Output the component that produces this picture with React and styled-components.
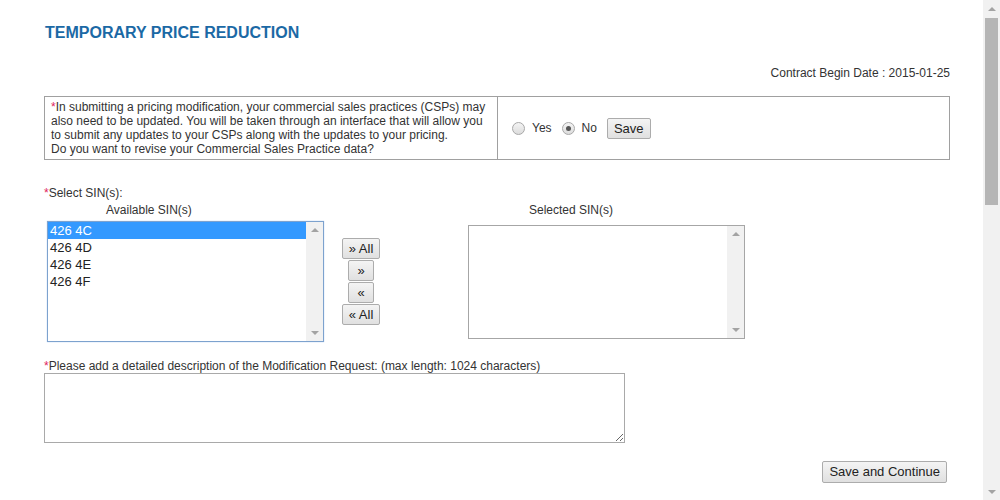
import React from 'react';
import styled, { createGlobalStyle } from 'styled-components';

const GlobalStyle = createGlobalStyle`
  body {
    margin: 0;
    background: #fff;
    color: #333;
    font-family: 'Liberation Sans', Arial, sans-serif;
  }
`;

const Window = styled.div`
  display: flex;
  height: 500px;
  overflow: hidden;
`;

const Page = styled.div`
  flex: 1;
  padding: 23px 33px 0 44px;
`;

const PageScrollbar = styled.div`
  width: 17px;
  background: #f1f1f1;
  display: flex;
  flex-direction: column;
  align-items: center;
`;

const ScrollButton = styled.div`
  height: 17px;
  display: flex;
  align-items: center;
  justify-content: center;
`;

const PageThumb = styled.div`
  width: 13px;
  height: 187px;
  margin-top: 1px;
  background: #b5b5b5;
`;

const Spacer = styled.div`
  flex: 1;
`;

const Title = styled.h1`
  margin: 0;
  font-size: 16px;
  line-height: 19px;
  font-weight: bold;
  color: #1b69a5;
  padding-left: 1px;
`;

const ContractDate = styled.div`
  margin-top: 24px;
  font-size: 12px;
  line-height: 14px;
  text-align: right;
`;

const CspTable = styled.div`
  margin-top: 16px;
  display: grid;
  grid-template-columns: 453px 1fr;
  border: 1px solid #a0a0a0;
`;

const CspQuestion = styled.div`
  padding: 3px 4px 3px 6px;
  border-right: 1px solid #a0a0a0;
  font-size: 12px;
  line-height: 14px;
`;

const CspAnswer = styled.div`
  display: flex;
  align-items: center;
  padding-left: 14px;
  font-size: 12px;
`;

const Req = styled.span`
  color: #e0245e;
`;

const RadioLabel = styled.label`
  display: flex;
  align-items: center;
  gap: 7px;
  margin-right: 10px;
`;

const Radio = styled.span`
  width: 11px;
  height: 11px;
  border-radius: 50%;
  border: 1px solid #a8a8a8;
  background: linear-gradient(#f4f4f4, #dcdcdc);
  display: flex;
  align-items: center;
  justify-content: center;
  &::after {
    content: '';
    width: 5px;
    height: 5px;
    border-radius: 50%;
    background: ${p => (p.checked ? '#555' : 'transparent')};
  }
`;

const Button = styled.button`
  font-family: 'Liberation Sans', Arial, sans-serif;
  font-size: 13px;
  line-height: ${p => p.$lh || 15}px;
  color: #222;
  padding: 2px ${p => p.$pad || 6}px;
  border: 1px solid #acacac;
  border-radius: 2px;
  background: linear-gradient(#f4f4f4, #e0e0e0);
  cursor: pointer;
`;

const FieldLabel = styled.div`
  margin-top: ${p => p.$top}px;
  font-size: 12px;
  line-height: 14px;
`;

const PickerGrid = styled.div`
  display: grid;
  grid-template-columns: 297px 127px 1fr;
  align-items: center;
`;

const ColHeader = styled.div`
  font-size: 12px;
  line-height: 14px;
  margin: 3px 0 4px;
  padding-left: ${p => p.$indent}px;
`;

const ListBox = styled.div`
  margin-left: ${p => p.$left || 0}px;
  width: 277px;
  height: ${p => p.$height}px;
  box-sizing: border-box;
  border: 1px solid ${p => (p.$focused ? '#7da2ce' : '#a6a6a6')};
  box-shadow: ${p => (p.$focused ? '0 0 1px #9ec3ef' : 'none')};
  display: flex;
  background: #fff;
`;

const Options = styled.div`
  flex: 1;
  font-size: 13px;
  line-height: 17px;
`;

const Option = styled.div`
  padding-left: 2px;
  background: ${p => (p.selected ? '#3399ff' : 'transparent')};
  color: ${p => (p.selected ? '#fff' : '#222')};
`;

const ScrollTrack = styled.div`
  width: 17px;
  background: #f1f1f1;
  display: flex;
  flex-direction: column;
  justify-content: space-between;
  align-items: center;
  padding: 6px 0;
`;

const Arrow = styled.span`
  width: 0;
  height: 0;
  border-left: 4px solid transparent;
  border-right: 4px solid transparent;
  ${p => (p.down ? 'border-top: 4px solid #a3a3a3;' : 'border-bottom: 4px solid #a3a3a3;')}
`;

const MoveButtons = styled.div`
  width: 40px;
  display: flex;
  flex-direction: column;
  align-items: center;
  gap: 1px;
`;

const Description = styled.textarea`
  display: block;
  margin: 0;
  width: 581px;
  height: 70px;
  box-sizing: border-box;
  border: 1px solid #a9a9a9;
  font-family: 'Liberation Sans', Arial, sans-serif;
  font-size: 12px;
`;

const Footer = styled.div`
  margin-top: 18px;
  display: flex;
  justify-content: flex-end;
  padding-right: 3px;
`;

function Scroll() {
  return (
    <ScrollTrack>
      <Arrow />
      <Arrow down />
    </ScrollTrack>
  );
}

const available = ['426 4C', '426 4D', '426 4E', '426 4F'];

export default function App() {
  return (
    <Window>
      <GlobalStyle />
      <Page>
        <Title>TEMPORARY PRICE REDUCTION</Title>
        <ContractDate>Contract Begin Date : 2015-01-25</ContractDate>

        <CspTable>
          <CspQuestion>
            <Req>*</Req>In submitting a pricing modification, your commercial sales practices (CSPs) may<br />
            also need to be updated. You will be taken through an interface that will allow you<br />
            to submit any updates to your CSPs along with the updates to your pricing.<br />
            Do you want to revise your Commercial Sales Practice data?
          </CspQuestion>
          <CspAnswer>
            <RadioLabel><Radio />Yes</RadioLabel>
            <RadioLabel><Radio checked />No</RadioLabel>
            <Button>Save</Button>
          </CspAnswer>
        </CspTable>

        <FieldLabel $top={26}><Req>*</Req>Select SIN(s):</FieldLabel>
        <PickerGrid>
          <ColHeader $indent={62}>Available SIN(s)</ColHeader>
          <div />
          <ColHeader $indent={61}>Selected SIN(s)</ColHeader>

          <ListBox $left={3} $height={121} $focused>
            <Options>
              {available.map((sin, i) => (
                <Option key={sin} selected={i === 0}>{sin}</Option>
              ))}
            </Options>
            <Scroll />
          </ListBox>
          <MoveButtons>
            <Button>» All</Button>
            <Button $pad={8}>»</Button>
            <Button $pad={8}>«</Button>
            <Button>« All</Button>
          </MoveButtons>
          <ListBox $height={114}>
            <Options />
            <Scroll />
          </ListBox>
        </PickerGrid>

        <FieldLabel $top={17}>
          <Req>*</Req>Please add a detailed description of the Modification Request: (max length: 1024 characters)
        </FieldLabel>
        <Description />

        <Footer>
          <Button $lh={16}>Save and Continue</Button>
        </Footer>
      </Page>

      <PageScrollbar>
        <ScrollButton><Arrow /></ScrollButton>
        <PageThumb />
        <Spacer />
        <ScrollButton><Arrow down /></ScrollButton>
      </PageScrollbar>
    </Window>
  );
}
